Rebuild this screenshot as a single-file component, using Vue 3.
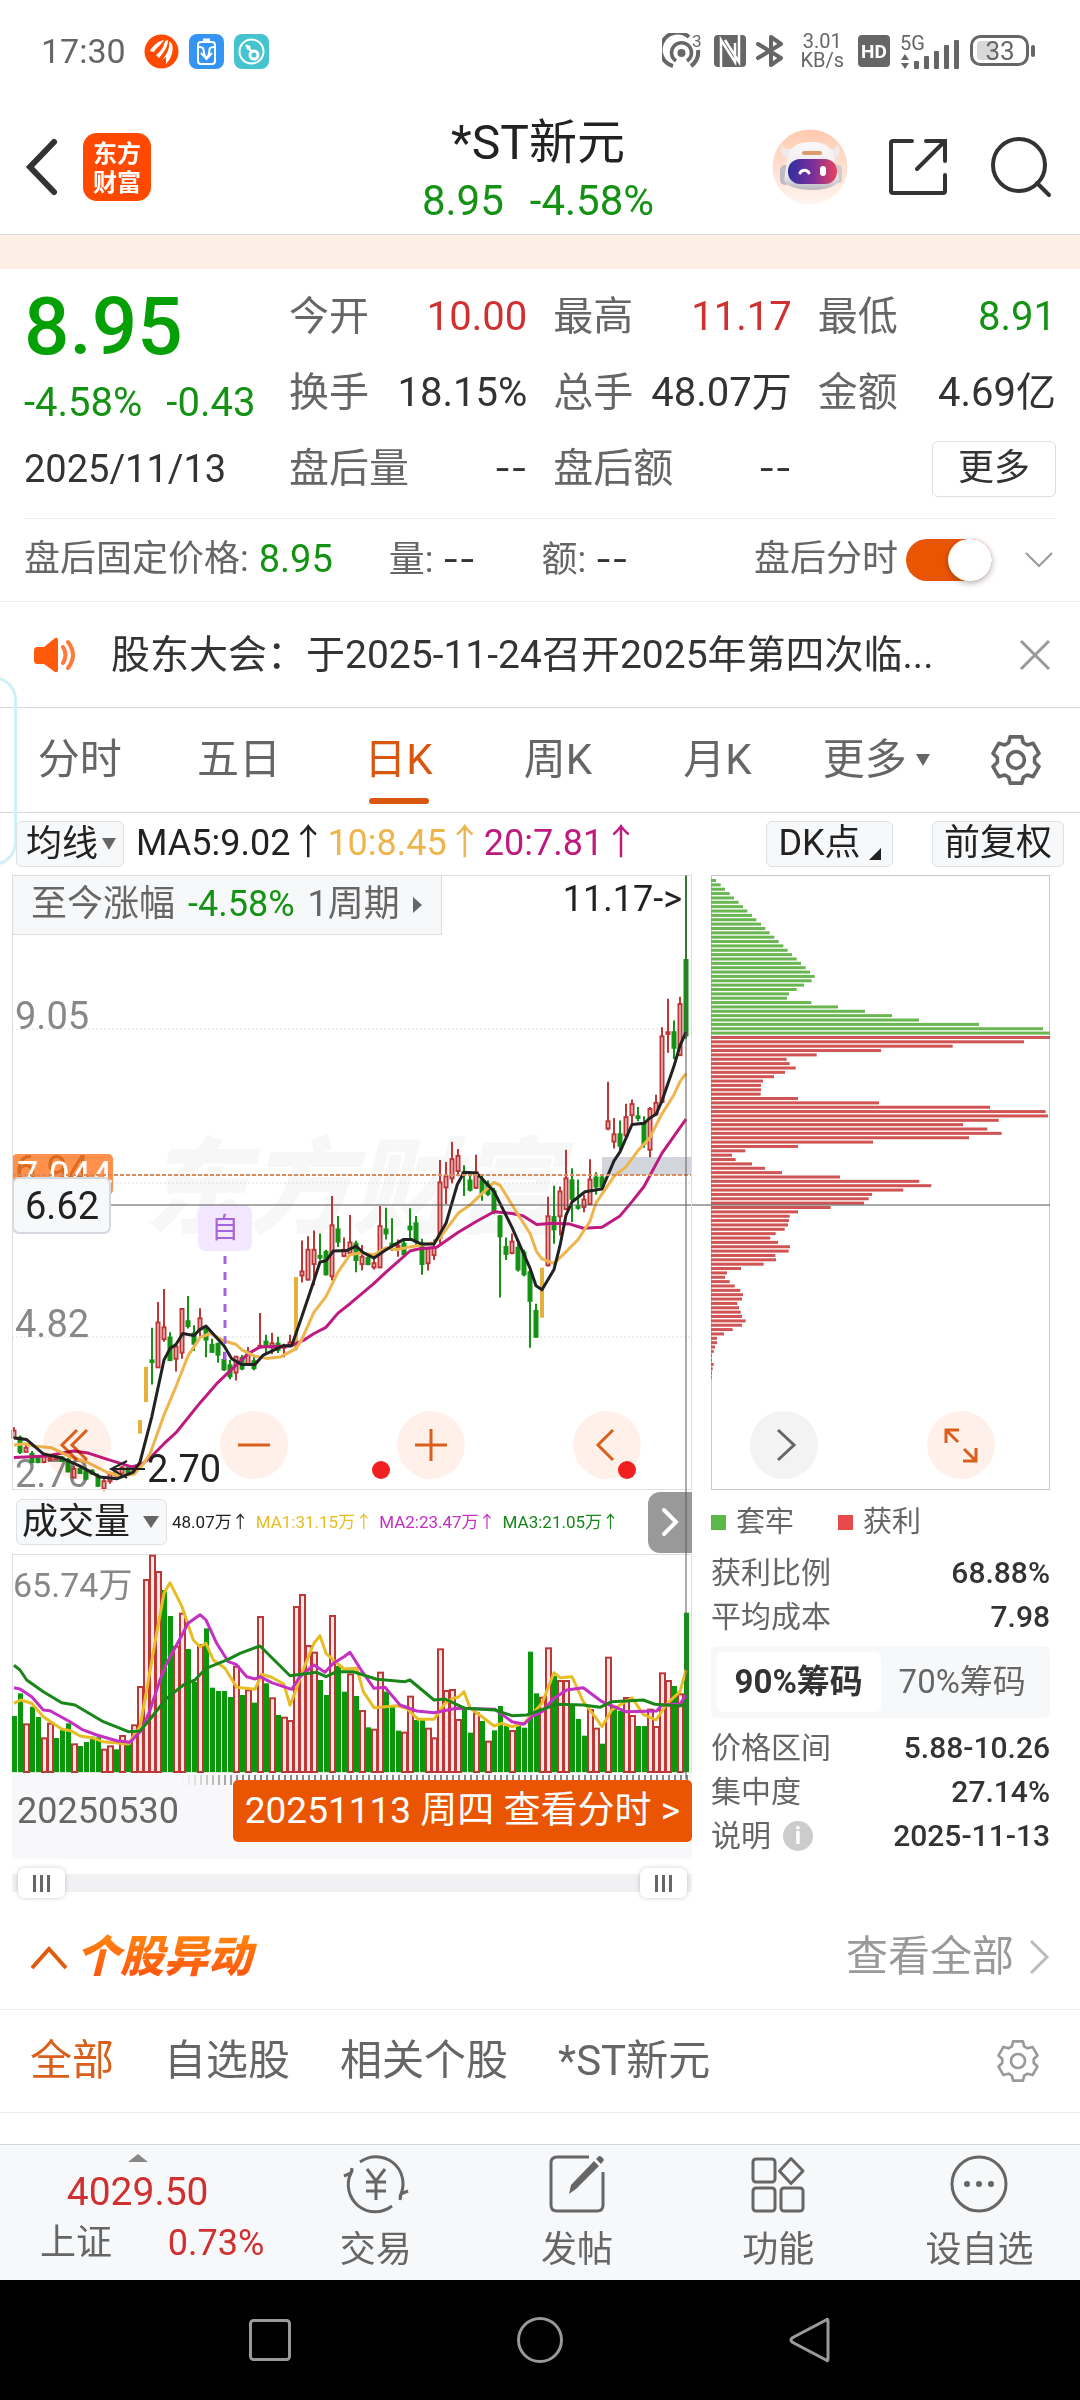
<script setup>
import { ref } from 'vue'

const afterHours = ref(true)
const rangeStart = ref(0)
const rangeEnd = ref(100)
const period = ref('日K')
const periods = ['分时', '五日', '日K', '周K', '月K']
const chip = ref('90')

const quotes = [
  { label: '今开', value: '10.00', tone: 'up' },
  { label: '最高', value: '11.17', tone: 'up' },
  { label: '最低', value: '8.91', tone: 'down' },
  { label: '换手', value: '18.15%' },
  { label: '总手', value: '48.07万' },
  { label: '金额', value: '4.69亿' },
  { label: '盘后量', value: '--' },
  { label: '盘后额', value: '--' },
]

// Horizontal step between trading days, and the scale of the stored levels.
const STEP = 6
const dayX = (i) => 2 + i * STEP
const priceY = (v) => v / 2.45 - 15
const volY = (v) => v / 3 - 74

// One row per day: colour, high, body top, body bottom, low.
const candleRows = `r 1390 1398 1415 1415|g 1410 1415 1450 1455|r 1433 1440 1450 1450|g 1448 1455 1475 1478|g 1460 1465 1475 1478|r 1452 1460 1475 1478|r 1460 1465 1470 1472|r 1458 1462 1468 1470|g 1460 1464 1472 1474|g 1465 1470 1498 1500|r 1485 1492 1513 1515|g 1488 1492 1502 1504|g 1495 1500 1516 1520|g 1493 1496 1503 1506|g 1503 1510 1533 1536|r 1515 1522 1540 1545|r 1498 1505 1522 1528|r 1495 1498 1508 1510|r 1485 1488 1503 1508|g 1485 1490 1503 1506|r 1485 1490 1498 1504|y 1373 1373 1404 1404|y 1243 1243 1327 1327|g 1146 1226 1230 1285|r 1083 1133 1243 1243|r 1051 1145 1174 1180|g 1157 1170 1225 1228|r 1187 1192 1222 1253|r 1098 1100 1207 1222|g 1068 1130 1142 1148|g 1140 1160 1185 1203|r 1098 1123 1150 1172|g 1145 1150 1175 1218|g 1173 1188 1205 1207|g 1182 1186 1212 1232|g 1205 1225 1248 1252|g 1225 1238 1265 1272|r 1215 1217 1256 1275|g 1213 1220 1246 1250|r 1193 1210 1236 1240|g 1212 1228 1245 1250|r 1110 1190 1194 1196|g 1163 1180 1190 1210|r 1158 1184 1194 1210|g 1168 1185 1200 1208|r 1185 1192 1195 1218|r 1163 1182 1188 1190|y 1023 1023 1200 1200|r 932 1008 1018 1035|r 922 955 1028 1030|r 908 955 990 1042|g 915 970 974 980|g 955 960 1015 1018|r 823 895 1020 1030|g 872 905 935 948|r 925 955 970 973|r 870 937 963 970|g 933 940 980 1010|r 943 972 990 1005|g 968 975 990 993|r 970 988 998 1003|r 848 897 998 1000|g 852 905 915 930|g 878 940 945 958|r 930 945 950 972|g 932 940 966 970|g 853 898 905 930|g 872 890 935 945|g 928 940 990 1016|r 948 952 988 1006|r 930 950 968 980|r 735 790 925 940|r 740 775 802 843|r 690 733 780 792|r 708 725 762 775|g 748 765 770 823|g 763 785 808 812|r 722 765 803 806|g 772 785 815 835|g 785 795 818 823|g 803 812 860 868|g 870 873 922 1072|g 925 948 965 980|r 915 935 963 966|g 938 950 1003 1008|g 955 962 1015 1020|g 1003 1010 1080 1195|g 1087 1105 1168 1170|y 1000 1000 1120 1120|r 825 873 993 996|g 798 875 905 940|r 800 812 873 920|r 710 780 855 858|g 755 785 830 887|g 783 848 852 857|r 820 832 850 863|r 733 783 843 846|g 765 778 800 820|g 772 778 800 806|r 543 640 658 662|r 632 672 690 707|g 638 672 700 710|r 597 630 675 680|r 587 598 625 645|g 605 628 632 640|g 628 645 695 705|r 605 610 710 728|r 575 595 623 626|r 410 432 593 595|r 340 422 426 472|g 393 422 460 488|r 335 353 478 480|g 37 245 430 438`
const candles = candleRows.split('|').map((row, i) => {
  const [tone, ...levels] = row.split(' ')
  const [high, top, bottom, low] = levels.map((v) => priceY(Number(v)))
  return { x: dayX(i), tone, high, top, bottom, low }
})

const volumeRows = 'g708 g640 r730 g680 g711 r772 r728 g774 g748 g730 r790 g798 g786 g770 g772 r806 r796 g808 r765 g793 r733 r618 r297 r224 r273 g330 g408 r497 r398 g507 g606 r492 g445 g623 g633 g633 g651 r557 g645 r628 g668 r408 g610 r652 g705 r710 r720 r378 r342 r495 r515 g600 g645 r405 g558 g635 r580 g648 r690 g742 r746 r575 g635 g680 g752 r755 r647 g720 g720 r743 r772 r505 r630 r627 r717 g688 g758 r697 g723 r782 g751 g678 g738 r750 g735 g743 g515 g640 r650 r502 g588 r600 r600 g678 g717 g767 r687 r743 g791 r530 g680 g693 r651 r705 g738 g738 r686 r738 r577 r600 g618 r640 g398'
const volumes = volumeRows.split(' ').map((row, i) => ({
  x: dayX(i),
  tone: row[0],
  top: volY(Number(row.slice(1))),
}))

const line = (points, toY) =>
  points.trim().split(' ').map((p) => {
    const [x, y] = p.split(',').map(Number)
    return `${(x / 3 - 12).toFixed(1)},${toY(y).toFixed(1)}`
  }).join(' ')

const ma5 = line('42,1416 80,1420 130,1455 185,1465 240,1485 300,1512 350,1516 400,1500 420,1475 455,1365 492,1225 510,1197 528,1187 548,1160 582,1165 600,1150 618,1142 672,1190 695,1222 725,1236 765,1236 790,1213 850,1190 875,1190 905,1120 942,1030 960,985 978,982 1000,958 1040,957 1068,946 1090,962 1122,975 1158,955 1210,930 1235,930 1265,941 1302,941 1338,890 1372,795 1392,765 1430,767 1482,812 1536,900 1590,1000 1608,1043 1626,1053 1662,1003 1680,945 1698,870 1716,838 1755,813 1806,806 1842,737 1860,715 1896,648 1932,645 1950,632 1968,623 1986,590 2022,505 2040,455 2058,422', priceY)
const ma10 = line('42,1433 75,1430 100,1436 155,1440 210,1462 260,1475 320,1500 360,1508 402,1505 430,1480 450,1455 492,1360 528,1290 564,1215 600,1170 630,1160 672,1178 708,1187 726,1200 762,1215 800,1221 840,1218 888,1197 905,1175 942,1108 978,1070 1014,1010 1050,967 1080,963 1122,967 1158,950 1190,955 1230,948 1300,938 1320,925 1375,865 1410,845 1482,790 1500,797 1536,845 1590,915 1610,960 1626,977 1662,988 1698,960 1734,930 1770,885 1788,840 1842,775 1878,752 1914,712 1950,680 1968,650 1986,622 2022,575 2040,543 2058,523', priceY)
const ma20 = line('42,1464 140,1460 220,1448 265,1453 320,1468 395,1487 425,1480 450,1465 492,1430 528,1403 600,1330 650,1283 705,1240 744,1210 780,1193 870,1191 910,1177 942,1160 978,1145 1014,1110 1050,1087 1122,1037 1158,1010 1230,958 1255,953 1310,949 1375,912 1430,885 1482,862 1536,866 1570,872 1610,893 1662,890 1710,892 1750,902 1806,900 1860,872 1896,837 1932,800 1986,718 2058,635', priceY)
const vol1 = line('42,670 62,660 95,670 130,710 185,747 215,753 240,768 275,773 310,785 385,792 420,740 440,630 468,470 492,340 510,308 546,380 580,480 600,500 618,490 640,540 675,565 710,622 765,628 785,583 815,592 852,613 870,676 888,630 905,580 942,490 960,467 978,520 1000,540 1032,567 1070,565 1090,635 1122,683 1190,677 1220,685 1255,718 1302,718 1335,670 1360,655 1375,652 1392,635 1410,683 1446,710 1482,738 1505,730 1536,740 1572,730 1626,670 1662,578 1680,593 1716,590 1750,665 1785,710 1806,740 1835,690 1896,653 1930,703 1968,720 2000,672 2040,635 2058,570', volY)
const vol2 = line('42,623 60,627 95,650 130,690 150,692 210,725 245,748 290,765 350,782 390,787 425,750 450,690 480,600 500,550 546,465 564,430 600,404 618,420 650,490 685,545 708,553 740,590 765,597 780,590 815,608 875,628 900,590 942,555 975,577 1000,550 1032,530 1050,517 1080,565 1122,625 1155,622 1200,675 1250,693 1302,698 1370,685 1485,688 1536,725 1572,733 1595,710 1626,695 1662,655 1700,630 1750,623 1806,665 1878,695 1970,693 1985,675 2040,672 2058,645', volY)
const vol3 = line('42,556 60,570 80,600 130,635 185,668 225,675 310,725 385,755 420,753 450,718 500,655 550,615 585,600 618,565 685,538 720,520 780,498 870,587 950,577 978,590 1010,575 1060,575 1130,598 1215,605 1230,600 1302,660 1335,657 1395,685 1485,690 1536,707 1580,705 1670,673 1750,675 1800,682 1835,665 1930,660 1965,673 2040,678 2058,670', volY)

// Chip distribution, from the highest price down; the first 36 levels are at a loss.
const chips = [15, 29, 42, 56, 69, 83, 96, 109, 123, 136, 150, 163, 176, 190, 203, 217, 230, 243, 257, 270, 284, 297, 311, 302, 279, 257, 234, 228, 301, 381, 462, 543, 624, 804, 996, 1017, 1017, 939, 725, 510, 317, 227, 236, 254, 222, 189, 156, 150, 150, 149, 261, 504, 837, 1004, 1011, 863, 756, 829, 872, 774, 486, 261, 103, 63, 74, 123, 162, 213, 387, 625, 661, 577, 483, 473, 459, 359, 261, 236, 234, 231, 221, 194, 178, 201, 237, 233, 193, 195, 158, 90, 48, 42, 56, 71, 88, 96, 93, 79, 84, 89, 93, 104, 93, 65, 39, 18, 18, 12, 8, 3, 3, 8, 5, 3, 2]
  .map((v, i) => ({ width: v / 3, y: 5 + i * 4.36, loss: i < 36 }))

const gear = (() => {
  const pts = []
  for (let k = 0; k < 6; k++) {
    for (const [da, r] of [[-23, 18], [-14, 23], [14, 23], [23, 18]]) {
      const a = ((k * 60 - 90 + da) * Math.PI) / 180
      pts.push(`${(25 + r * Math.cos(a)).toFixed(1)},${(25 + r * Math.sin(a)).toFixed(1)}`)
    }
  }
  return pts.join(' ')
})()
</script>

<template>
  <div class="page">
    <div class="status">
      <span class="clock">17:30</span>
      <svg width="35" height="35" viewBox="0 0 35 35">
        <circle cx="17.5" cy="17.5" r="17" fill="#ff4a00" />
        <g fill="#fff"><path d="M6 17C10 10 15 7 20 6C17 11 12 14 10 18Z" /><path d="M12 21C18 16 20 12 21 7L24 6C24 14 18 20 15 24Z" /><path d="M18 26C24 19 26 13 25 7L28 10C30 17 27 25 22 30L22 23Z" /></g>
      </svg>
      <svg width="35" height="35" viewBox="0 0 35 35">
        <rect width="35" height="35" rx="8" fill="#3595f5" />
        <g fill="none" stroke="#fff" stroke-width="2"><rect x="9" y="8" width="17" height="22" rx="3" /><path d="M14 6h7" stroke-width="3" /><path d="M10 13c8 0 2 6 7.5 11M25 13c-8 0-2 6-7.5 11M12 19l5.500 6l5.500-6" /></g>
      </svg>
      <svg width="35" height="35" viewBox="0 0 35 35">
        <rect width="35" height="35" rx="8" fill="#45c4d0" />
        <g fill="none" stroke="#fff" stroke-width="2"><circle cx="17.5" cy="17.5" r="12" /><circle cx="20" cy="21" r="4" stroke-width="3" /><path d="M18 18l-6-7M13 15l3-3" stroke-width="2.500" /></g>
      </svg>
      <span class="grow"></span>
      <svg width="42" height="36" viewBox="0 0 42 36">
        <g fill="none" stroke="#666" stroke-width="4"><path d="M11 33A17 17 0 1 1 27 4M36 17A17 17 0 0 1 29 33" /><path d="M14 28A10 10 0 1 1 25 28" stroke-width="3.500" /></g>
        <circle cx="19.5" cy="20" r="4" fill="#666" />
        <text x="30" y="14" font-size="17" fill="#666">3</text>
      </svg>
      <svg width="32" height="32" viewBox="0 0 32 32">
        <rect width="32" height="32" rx="4" fill="#666" />
        <path d="M7 32V5L21 27V8M11 5L25 27V0" fill="none" stroke="#fff" stroke-width="2.500" />
      </svg>
      <svg width="28" height="34" viewBox="0 0 28 34"><path d="M2 10L25 24L15 31V3L25 10L2 24" fill="none" stroke="#666" stroke-width="4" stroke-linejoin="round" stroke-linecap="round" /></svg>
      <span class="speed">3.01<br>KB/s</span>
      <svg width="32" height="32" viewBox="0 0 32 32">
        <rect width="32" height="32" rx="4" fill="#666" />
        <text x="16" y="23" font-size="19" font-weight="700" text-anchor="middle" fill="#fff">HD</text>
      </svg>
      <svg width="60" height="40" viewBox="0 0 60 40">
        <text x="0" y="19" font-size="20" fill="#666">5G</text>
        <g fill="#666"><path d="M1 29l4-6l4 6zM1 32h8l-4 6z" /><rect x="14" y="30" width="5" height="8" rx="1" /><rect x="24" y="25" width="5" height="13" rx="1" /><rect x="34" y="20" width="5" height="18" rx="1" /><rect x="44" y="14" width="5" height="24" rx="1" /><rect x="54" y="9" width="5" height="29" rx="1" /></g>
      </svg>
      <svg width="66" height="32" viewBox="0 0 66 32">
        <rect x="1.500" y="1.500" width="56" height="28" rx="9" fill="none" stroke="#666" stroke-width="3" />
        <rect x="7" y="6" width="18" height="19" rx="4" fill="#d8d8d8" />
        <rect x="61" y="10" width="4" height="12" rx="2" fill="#666" />
        <text x="30" y="25" font-size="26" text-anchor="middle" fill="#666">33</text>
      </svg>
    </div>

    <header class="header">
      <div class="side">
        <button class="icon" aria-label="返回"><svg width="36" height="60" viewBox="0 0 36 60"><path d="M30 5L6 30L30 55" fill="none" stroke="#333" stroke-width="6" stroke-linecap="round" /></svg></button>
        <a class="logo" href="#">东方<br>财富</a>
      </div>
      <div class="title">
        <h1>*ST新元</h1>
        <p class="down"><span>8.95</span><span>-4.58%</span></p>
      </div>
      <div class="side right">
        <button class="icon" aria-label="智能助手">
          <svg width="76" height="76" viewBox="0 0 76 76">
            <defs>
              <linearGradient id="halo" x1="0" y1="0" x2="0" y2="1"><stop offset="0" stop-color="#ffc9ae" /><stop offset="1" stop-color="#fff6f1" /></linearGradient>
              <linearGradient id="visor" x1="0" y1="0" x2="1" y2="0"><stop offset="0" stop-color="#2e2fa0" /><stop offset="0.500" stop-color="#7a2f9c" /><stop offset="1" stop-color="#e8435a" /></linearGradient>
              <linearGradient id="shell" x1="0" y1="0" x2="0" y2="1"><stop offset="0" stop-color="#fbf8f8" /><stop offset="0.700" stop-color="#ebe8ec" /><stop offset="1" stop-color="#b9b5be" /></linearGradient>
            </defs>
            <circle cx="38" cy="38" r="37.500" fill="url(#halo)" />
            <path d="M18 30C9 28 7 22 10 16C13 22 20 20 25 18M53 18C60 21 64 20 66 15C70 24 66 30 60 31" fill="#f0e9ea" />
            <rect x="8" y="36" width="10" height="20" rx="5" fill="#bfbbc4" /><rect x="61" y="36" width="9" height="18" rx="4" fill="#cfcbd2" />
            <path d="M15 32C17 16 28 13 39 13S61 16 63 32L67 50C66 58 52 61 40 61S14 58 12 51Z" fill="url(#shell)" />
            <rect x="16" y="30" width="49" height="25" rx="12" fill="url(#visor)" />
            <rect x="30" y="22" width="20" height="4" rx="2" fill="#dd9a6b" />
            <path d="M28 44a5 5 0 0 1 9 0" fill="none" stroke="#fff" stroke-width="3" stroke-linecap="round" /><rect x="48" y="37" width="6" height="10" rx="3" fill="#fff" />
          </svg>
        </button>
        <button class="icon" aria-label="分享"><svg width="60" height="60" viewBox="0 0 60 60"><path d="M23 4H4a2 2 0 0 0-2 2V54a2 2 0 0 0 2 2H54a2 2 0 0 0 2-2V38M37 4H56V24M56 4L28 32" fill="none" stroke="#333" stroke-width="4" stroke-linecap="round" /></svg></button>
        <button class="icon" aria-label="搜索"><svg width="62" height="62" viewBox="0 0 62 62"><circle cx="29" cy="29" r="26" fill="none" stroke="#333" stroke-width="4" /><path d="M47 47L59 59" stroke="#333" stroke-width="4" stroke-linecap="round" /></svg></button>
      </div>
    </header>
    <div class="band"></div>

    <section class="quote">
      <div class="main">
        <strong>8.95</strong>
        <p class="change"><span>-4.58%</span><span>-0.43</span></p>
        <time>2025/11/13</time>
      </div>
      <div v-for="q in quotes" :key="q.label" class="cell">
        <span class="muted">{{ q.label }}</span>
        <span :class="[q.tone, { dash: q.value === '--' }]">{{ q.value }}</span>
      </div>
      <div class="cell end"><button class="more">更多</button></div>
    </section>

    <section class="after">
      <span>盘后固定价格:</span><b class="down">8.95</b>
      <span class="vol">量: <i class="dash">--</i></span>
      <span>额: <i class="dash">--</i></span>
      <label for="after-hours">盘后分时</label>
      <input id="after-hours" v-model="afterHours" type="checkbox" class="switch">
      <button class="icon" aria-label="展开"><svg width="30" height="20" viewBox="0 0 30 20"><path d="M2 3L15 16L28 3" fill="none" stroke="#999" stroke-width="2" /></svg></button>
    </section>

    <section class="notice">
      <svg width="46" height="38" viewBox="0 0 46 38"><path d="M4 11H11L22 2Q25 1 25 4V34Q25 37 22 36L11 28H4Q1 28 1 24V15Q1 11 4 11Z" fill="#ff5a0a" /><path d="M30 11Q35 19 30 27M35 6Q45 19 35 32" fill="none" stroke="#ff7a3a" stroke-width="4" stroke-linecap="round" /></svg>
      <a href="#">股东大会：于2025-11-24召开2025年第四次临...</a>
      <button class="icon" aria-label="关闭"><svg width="32" height="32" viewBox="0 0 32 32"><path d="M2 2L30 30M30 2L2 30" stroke="#999" stroke-width="3" /></svg></button>
    </section>

    <nav class="periods">
      <button v-for="p in periods" :key="p" :class="{ on: p === period }" @click="period = p">{{ p }}</button>
      <button>更多<svg width="16" height="14" viewBox="0 0 16 14"><path d="M1 1H15L8 13Z" fill="#666" /></svg></button>
      <button class="cog" aria-label="设置"><svg width="52" height="52" viewBox="0 0 50 50"><polygon :points="gear" fill="none" stroke="#666" stroke-width="3.500" stroke-linejoin="round" /><circle cx="25" cy="25" r="8" fill="none" stroke="#666" stroke-width="3.500" /></svg></button>
      <div class="bubble"></div>
    </nav>

    <div class="tools">
      <label class="pick"><select aria-label="指标"><option>均线</option></select><svg width="14" height="14" viewBox="0 0 14 14"><path d="M0 1H14L7 13Z" fill="#666" /></svg></label>
      <p class="ma"><span>MA5:9.02↑</span><span class="c10">10:8.45↑</span><span class="c20">20:7.81↑</span></p>
      <button class="box dk">DK点<svg width="12" height="12" viewBox="0 0 12 12"><path d="M12 0V12H0Z" fill="#222" /></svg></button>
      <button class="box adj">前复权</button>
    </div>

    <section class="charts">
      <div class="left">
        <div class="price">
          <svg class="plot" viewBox="0 0 680 615">
            <text class="mark" x="132" y="350">东方财富</text>
            <rect x="590" y="282" width="90" height="18" fill="#d2d6dc" />
            <g stroke="#ddd" stroke-width="1" stroke-dasharray="2 2"><path d="M0 154H680M0 308H680M0 462H680" /></g>
            <g class="axis"><text x="3" y="154">9.05</text><text x="3" y="462">4.82</text><text x="3" y="612">2.70</text></g>
            <g v-for="c in candles" :key="c.x" :class="'k-' + c.tone">
              <line :x1="c.x" :x2="c.x" :y1="c.high" :y2="c.top" />
              <line :x1="c.x" :x2="c.x" :y1="c.bottom" :y2="c.low" />
              <rect :x="c.x - 1.5" :y="c.top" width="3" :height="c.bottom - c.top" />
            </g>
            <polyline :points="ma20" class="curve" stroke="#be1a7f" />
            <polyline :points="ma10" class="curve" stroke="#efb54d" />
            <polyline :points="ma5" class="curve" stroke="#222" />
            <rect x="186" y="330" width="54" height="46" rx="8" fill="#f0e2ff" fill-opacity="0.800" />
            <text x="213" y="363" font-size="28" text-anchor="middle" fill="#a566dd">自</text>
            <path d="M213 381V485" stroke="#a566dd" stroke-width="3" stroke-dasharray="8 8" />
            <rect x="0" y="279" width="101" height="41" rx="5" fill="#ff914d" />
            <text x="3" y="308" font-size="38" fill="#d96a20">6.94</text>
            <text x="5" y="314" font-size="38" fill="#fff">7.044</text>
            <path d="M0 300H680" stroke="#dd8a5a" stroke-width="2" stroke-dasharray="4 2" />
            <path d="M98 330H680" stroke="#555" stroke-width="1" />
            <rect x="1" y="303" width="97" height="55" rx="6" fill="#f7f8fa" stroke="#d5d8de" stroke-width="2" />
            <text x="13" y="344" font-size="38" fill="#222">6.62</text>
            <text x="670" y="36" font-size="36" text-anchor="end" fill="#222">11.17-&gt;</text>
            <path d="M115 586L99 594L115 603M99 594H133" fill="none" stroke="#222" stroke-width="2" />
            <text x="135" y="607" font-size="38" fill="#222">2.70</text>
            <circle cx="369" cy="595" r="9" fill="#f02020" /><circle cx="615" cy="595" r="9" fill="#f02020" />
            <rect x="0.500" y="0.500" width="679" height="614" fill="none" stroke="#ddd" />
          </svg>
          <button class="since">至今涨幅<span class="down">-4.58%</span>1周期<svg width="10" height="18" viewBox="0 0 10 18"><path d="M0 1L9 9L0 17Z" fill="#666" /></svg></button>
        </div>
        <div class="volhead">
          <label class="pick wide"><select aria-label="副图"><option>成交量</option></select><svg width="16" height="14" viewBox="0 0 16 14"><path d="M0 1H16L8 13Z" fill="#666" /></svg></label>
          <p class="volma"><span>48.07万↑</span><span class="v1">MA1:31.15万↑</span><span class="v2">MA2:23.47万↑</span><span class="v3">MA3:21.05万↑</span></p>
          <button class="fold" aria-label="下一组"><svg width="18" height="30" viewBox="0 0 18 30"><path d="M3 3L15 15L3 27" fill="none" stroke="#fff" stroke-width="4" stroke-linecap="round" /></svg></button>
        </div>
        <svg class="plot" viewBox="0 0 680 220">
          <rect x="0.500" y="0.500" width="679" height="218" fill="none" stroke="#ddd" />
          <g v-for="v in volumes" :key="v.x">
            <rect v-if="v.tone === 'g'" :x="v.x - 2" :y="v.top" width="5" :height="218 - v.top" fill="#0a980a" />
            <rect v-else :x="v.x - 2" :y="v.top + 1" width="5" :height="217 - v.top" fill="#fbe9e9" stroke="#be3737" stroke-width="2" />
          </g>
          <text x="1" y="43" font-size="34" fill="#888">65.74万</text>
          <polyline :points="vol1" class="curve" stroke="#e6bd25" />
          <polyline :points="vol2" class="curve" stroke="#c42fc4" />
          <polyline :points="vol3" class="curve" stroke="#188618" />
        </svg>
        <div class="dates">
          <div class="ticks"></div>
          <span>20250530</span>
          <button>20251113 周四 查看分时 &gt;</button>
        </div>
        <div class="cross"></div>
        <div class="range">
          <input v-model="rangeStart" type="range" min="0" max="100" aria-label="区间起点">
          <input v-model="rangeEnd" type="range" min="0" max="100" aria-label="区间终点">
        </div>
      </div>

      <div class="side-panel">
        <svg class="plot" viewBox="0 0 339 615">
          <rect x="0.500" y="0.500" width="338" height="614" fill="none" stroke="#c8c8c8" />
          <rect v-for="b in chips" :key="b.y" x="0" :y="b.y - 1" :width="b.width" height="3" :fill="b.loss ? '#6ab651' : '#d15454'" />
          <path d="M-20 330H339" stroke="#555" stroke-width="1" />
        </svg>
        <div class="legend"><i class="loss"></i><span>套牢</span><i class="gain"></i><span>获利</span></div>
        <dl>
          <div><dt>获利比例</dt><dd>68.88%</dd></div>
          <div><dt>平均成本</dt><dd>7.98</dd></div>
        </dl>
        <div class="segment">
          <button :class="{ on: chip === '90' }" @click="chip = '90'">90%筹码</button>
          <button :class="{ on: chip === '70' }" @click="chip = '70'">70%筹码</button>
        </div>
        <dl>
          <div><dt>价格区间</dt><dd>5.88-10.26</dd></div>
          <div><dt>集中度</dt><dd>27.14%</dd></div>
          <div><dt>说明<i class="info">i</i></dt><dd>2025-11-13</dd></div>
        </dl>
      </div>

      <div class="controls">
        <button aria-label="最早"><svg viewBox="0 0 68 68"><path d="M34 19L19 34L34 49M44 19L29 34L44 49" /></svg></button>
        <button aria-label="缩小"><svg viewBox="0 0 68 68"><path d="M18 34H50" /></svg></button>
        <button aria-label="放大"><svg viewBox="0 0 68 68"><path d="M18 34H50M34 18V50" /></svg></button>
        <button aria-label="向左"><svg viewBox="0 0 68 68"><path d="M40 19L25 34L40 49" /></svg></button>
        <button aria-label="向右" class="off"><svg viewBox="0 0 68 68"><path d="M28 19L44 34L28 49" /></svg></button>
        <button aria-label="全屏"><svg viewBox="0 0 68 68"><path d="M32 19H19V32M19 19L31 31M36 50H49V37M49 50L37 38" /></svg></button>
      </div>
    </section>

    <section class="moves">
      <svg width="38" height="26" viewBox="0 0 38 26"><path d="M2 23L19 4L36 23" fill="none" stroke="#e05a10" stroke-width="4" /></svg>
      <h2>个股异动</h2>
      <a href="#">查看全部<svg width="22" height="38" viewBox="0 0 22 38"><path d="M3 3L19 19L3 35" fill="none" stroke="#bbb" stroke-width="3" /></svg></a>
    </section>
    <nav class="filters">
      <button class="on">全部</button><button>自选股</button><button>相关个股</button><button>*ST新元</button>
      <button class="cog" aria-label="筛选设置"><svg width="44" height="44" viewBox="0 0 50 50"><polygon :points="gear" fill="none" stroke="#999" stroke-width="3" stroke-linejoin="round" /><circle cx="25" cy="25" r="8" fill="none" stroke="#999" stroke-width="3" /></svg></button>
    </nav>
    <div class="peek"></div>

    <footer class="bar">
      <a class="index" href="#">
        <svg width="20" height="8" viewBox="0 0 20 8"><path d="M0 8L10 0L20 8Z" fill="#888" /></svg>
        <span class="up">4029.50</span>
        <span class="pair"><span>上证</span><span class="up">0.73%</span></span>
      </a>
      <a href="#"><svg width="66" height="60" viewBox="0 0 66 60"><g fill="none" stroke="#666" stroke-width="3"><path d="M17 8A27 27 0 0 1 58 40L65 37M58 40L57 46M49 52A27 27 0 0 1 8 19L1 22M8 19L9 14" /><path d="M24 15L33 27L42 15M33 27V46M23 28H43M23 37H43" /></g></svg>交易</a>
      <a href="#"><svg width="60" height="60" viewBox="0 0 60 60"><path d="M42 3H10Q4 3 4 9V51Q4 57 10 57H50Q56 57 56 51V18" fill="none" stroke="#666" stroke-width="3" /><path d="M22 40L24 31L47 7L52 12L29 35ZM49 5L52 2Q55 2 57 6L54 10Z" fill="#666" /></svg>发帖</a>
      <a href="#"><svg width="60" height="60" viewBox="0 0 60 60"><g fill="none" stroke="#666" stroke-width="3"><rect x="5" y="5" width="22" height="23" rx="3" /><rect x="5" y="34" width="22" height="23" rx="3" /><rect x="33" y="34" width="22" height="23" rx="3" /><path d="M43 4.500L55 17L43 29.500L31.500 17Z" stroke-linejoin="round" /></g></svg>功能</a>
      <a href="#"><svg width="60" height="60" viewBox="0 0 60 60"><circle cx="30" cy="30" r="27" fill="none" stroke="#666" stroke-width="3" /><g fill="#666"><circle cx="18" cy="30" r="3" /><circle cx="30" cy="30" r="3" /><circle cx="42" cy="30" r="3" /></g></svg>设自选</a>
    </footer>

    <div class="system">
      <button aria-label="最近任务"><svg width="48" height="48" viewBox="0 0 48 48"><rect x="4.500" y="4.500" width="39" height="39" rx="3" /></svg></button>
      <button aria-label="主屏幕"><svg width="48" height="48" viewBox="0 0 48 48"><circle cx="24" cy="24" r="21.500" /></svg></button>
      <button aria-label="后退"><svg width="48" height="48" viewBox="0 0 48 48"><path d="M40 4Q42 2 42 5V43Q42 46 40 44L6 26Q4 24 6 22Z" /></svg></button>
    </div>
  </div>
</template>

<style>
body {
  background: #fff;
}
</style>

<style scoped>
.page {
  font-family: Roboto, "Noto Sans CJK SC", sans-serif;
  font-size: 40px;
  line-height: 1.2;
  color: #333;
  background: #fff;
}
* {
  box-sizing: border-box;
}
button {
  font: inherit;
  color: inherit;
  background: none;
  border: 0;
  padding: 0;
  white-space: nowrap;
}
a {
  color: inherit;
  text-decoration: none;
}
p, h1, h2, dl, dd {
  margin: 0;
}
svg {
  display: block;
  flex: none;
}
i {
  font-style: normal;
}
.icon {
  display: flex;
}
.grow {
  flex: 1;
}
.up {
  color: #cf3030;
}
.down {
  color: #149214;
}
.muted {
  color: #666;
}
.dash {
  font-family: Inter, sans-serif;
  font-size: 36px;
  color: #333;
}

.status {
  height: 100px;
  padding: 2px 44px 0 41px;
  display: flex;
  align-items: center;
  gap: 10px;
  color: #666;
}
.clock {
  font-size: 34px;
  margin-right: 8px;
}
.speed {
  font-size: 20px;
  line-height: 19px;
  text-align: center;
  margin: 0 4px 0 6px;
}

.header {
  height: 135px;
  border-bottom: 1px solid #d8d8d8;
  padding: 0 28px 0 24px;
  display: grid;
  grid-template-columns: 1fr auto 1fr;
  align-items: center;
}
.side {
  display: flex;
  align-items: center;
  gap: 23px;
}
.side.right {
  justify-content: flex-end;
  gap: 41px;
}
.logo {
  width: 68px;
  height: 68px;
  border-radius: 14px;
  background: #ff4800;
  color: #fff;
  font: 700 24px/29px "Noto Sans CJK SC", sans-serif;
  text-align: center;
  padding-top: 4px;
}
.title {
  padding-top: 8px;
  text-align: center;
}
.title h1 {
  font-size: 48px;
  line-height: 60px;
  font-weight: 400;
  color: #222;
}
.title p {
  font-size: 42px;
  line-height: 56px;
  display: flex;
  gap: 26px;
  justify-content: center;
}
.band {
  height: 34px;
  background: #fdeee6;
}

.quote {
  margin: 0 24px;
  padding: 10px 0 11px;
  display: grid;
  grid-template-columns: 239px repeat(3, 1fr);
  grid-auto-rows: 76px;
  column-gap: 26px;
  border-bottom: 1px solid #eee;
}
.main {
  grid-row: span 3;
}
.main strong {
  display: block;
  font-size: 80px;
  line-height: 96px;
  font-weight: 500;
  color: #05a005;
}
.change {
  display: flex;
  gap: 24px;
  line-height: 56px;
  color: #149214;
}
.main time {
  display: block;
  font-size: 38px;
  line-height: 76px;
}
.cell {
  display: flex;
  align-items: center;
  justify-content: space-between;
  white-space: nowrap;
}
.end {
  justify-content: flex-end;
}
.more {
  width: 124px;
  height: 56px;
  font-size: 36px;
  border: 1px solid #ddd;
  border-radius: 6px;
}

.after {
  height: 83px;
  padding: 0 26px 0 24px;
  border-bottom: 1px solid #eee;
  display: flex;
  align-items: center;
  font-size: 36px;
  color: #666;
}
.after b {
  font-size: 38px;
  font-weight: 400;
  margin-left: 10px;
}
.after .vol {
  margin: 0 66px 0 56px;
}
.after label {
  margin-left: auto;
}
.after .icon {
  margin-left: 32px;
}
.switch {
  appearance: none;
  width: 86px;
  height: 42px;
  margin: 0 0 0 8px;
  border-radius: 21px;
  background: #ccc;
  display: flex;
}
.switch:checked {
  background: #ea5504;
  justify-content: flex-end;
}
.switch::before {
  content: "";
  width: 44px;
  height: 42px;
  border-radius: 21px;
  background: #fff;
  box-shadow: 0 2px 6px rgba(0, 0, 0, 0.3);
}

.notice {
  height: 106px;
  padding: 0 29px 0 33px;
  border-bottom: 1px solid #d8d8d8;
  display: flex;
  align-items: center;
}
.notice a {
  flex: 1;
  margin-left: 32px;
  padding-top: 2px;
  font-size: 39px;
}

.periods {
  position: relative;
  height: 105px;
  border-bottom: 1px solid #d8d8d8;
  display: grid;
  grid-template-columns: repeat(6, 4fr) 3fr;
  padding-right: 4px;
  font-size: 42px;
  color: #666;
}
.periods button {
  display: flex;
  align-items: center;
  justify-content: center;
  gap: 8px;
  position: relative;
}
.periods .on {
  color: #d9560f;
}
.periods .on::after {
  content: "";
  position: absolute;
  bottom: 8px;
  width: 60px;
  height: 6px;
  border-radius: 3px;
  background: #d9560f;
}
.bubble {
  position: absolute;
  left: -40px;
  top: -32px;
  width: 57px;
  height: 190px;
  border: 3px solid #cdf1f4;
  border-radius: 24px;
  pointer-events: none;
}

.tools {
  height: 62px;
  padding: 0 16px;
  display: flex;
  align-items: center;
  font-size: 36px;
  color: #222;
}
.pick {
  position: relative;
  width: 108px;
  height: 46px;
  display: block;
}
.pick select {
  appearance: none;
  width: 100%;
  height: 100%;
  padding: 0 0 0 9px;
  font: inherit;
  line-height: 42px;
  color: #222;
  background: #f7f8fa;
  border: 1px solid #dde0e5;
  border-radius: 6px;
}
.pick svg {
  position: absolute;
  right: 8px;
  top: 16px;
  pointer-events: none;
}
.ma {
  display: flex;
  gap: 1px;
  margin-left: 12px;
  white-space: nowrap;
}
.c10 {
  color: #efb54d;
}
.c20 {
  color: #be1a7f;
}
.box {
  height: 46px;
  line-height: 42px;
  background: #f7f8fa;
  border: 1px solid #dde0e5;
  border-radius: 6px;
  display: flex;
  justify-content: center;
}
.dk {
  width: 127px;
  margin-left: auto;
  gap: 8px;
}
.dk svg {
  align-self: flex-end;
  margin-bottom: 6px;
}
.adj {
  width: 132px;
  margin-left: 39px;
}

.charts {
  position: relative;
  display: grid;
  grid-template-columns: 680fr 339fr;
  column-gap: 19px;
  padding: 0 30px 0 12px;
}
.left {
  position: relative;
  min-width: 0;
}
.price {
  position: relative;
}
.plot {
  width: 100%;
  height: auto;
  overflow: visible;
}
.mark {
  font-size: 104px;
  font-weight: 900;
  font-style: italic;
  fill: #f7f7f7;
}
.axis {
  font-size: 38px;
  fill: #888;
}
.curve {
  fill: none;
  stroke-width: 3;
  stroke-linejoin: round;
}
.k-r {
  stroke: #be3737;
  stroke-width: 2;
  fill: #fff;
}
.k-g {
  stroke: #149214;
  stroke-width: 2;
  fill: #149214;
}
.k-y {
  stroke: #e6b03c;
  stroke-width: 1;
  fill: #e6b03c;
}
.since {
  position: absolute;
  left: 0;
  top: 0;
  height: 60px;
  padding: 0 18px 0 18px;
  display: flex;
  align-items: center;
  gap: 13px;
  font-size: 36px;
  color: #666;
  background: #f7f8fa;
  border: 1px solid #ddd;
}
.volhead {
  height: 64px;
  padding-left: 4px;
  display: flex;
  align-items: center;
  font-size: 36px;
}
.pick.wide {
  width: 151px;
  flex: none;
}
.wide select {
  padding-left: 5px;
}
.volma {
  font-size: 17px;
  display: flex;
  gap: 7px;
  margin-left: 5px;
  white-space: nowrap;
  color: #222;
}
.v1 {
  color: #e6bd25;
}
.v2 {
  color: #c42fc4;
}
.v3 {
  color: #188618;
}
.fold {
  width: 44px;
  height: 61px;
  margin-left: auto;
  border-radius: 12px 0 0 12px;
  background: #999;
  display: flex;
  align-items: center;
  justify-content: center;
}
.dates {
  position: relative;
  height: 85px;
  padding: 6px 0 0 5px;
  display: flex;
  align-items: flex-start;
  justify-content: space-between;
  background: #f8f8fa;
  color: #666;
  font-size: 36px;
  line-height: 62px;
}
.ticks {
  position: absolute;
  top: 1px;
  left: 170px;
  right: 3px;
  height: 10px;
  background: repeating-linear-gradient(90deg, #888 0 2px, transparent 2px 6px);
  mask-image: linear-gradient(90deg, transparent, #000 60px);
}
.dates button {
  position: relative;
  z-index: 2;
  height: 62px;
  padding: 0 12px;
  font-size: 37px;
  color: #fff;
  background: #ea5504;
  border-radius: 5px;
}
.cross {
  position: absolute;
  left: 99%;
  top: 0;
  bottom: 119px;
  width: 2px;
  background: rgba(90, 90, 90, 0.5);
}
.range {
  height: 30px;
  margin-top: 9px;
  display: grid;
  padding: 0 5px 0 6px;
  background: linear-gradient(#f1f1f3, #f1f1f3) center / 100% 18px no-repeat;
  border-radius: 9px;
}
.range input {
  grid-area: 1 / 1;
  appearance: none;
  width: 100%;
  height: 30px;
  margin: 0;
  background: none;
  pointer-events: none;
}
.range input::-webkit-slider-thumb {
  appearance: none;
  width: 47px;
  height: 30px;
  border-radius: 7px;
  box-shadow: 0 0 5px rgba(0, 0, 0, 0.2);
  background: repeating-linear-gradient(90deg, #666 0 3px, transparent 3px 7px) center / 17px 17px no-repeat, #fff;
  pointer-events: auto;
}

.side-panel {
  min-width: 0;
  color: #666;
  font-size: 29px;
}
.legend {
  height: 60px;
  padding-top: 5px;
  display: flex;
  align-items: center;
}
.legend i {
  width: 15px;
  height: 15px;
  margin-right: 10px;
}
.loss {
  background: #5cb848;
}
.gain {
  background: #e84a4a;
  margin-left: 44px;
}
dl > div {
  height: 44px;
  padding-top: 1px;
  display: flex;
  align-items: center;
  justify-content: space-between;
}
dt {
  display: flex;
  align-items: center;
  font-size: 30px;
}
dd {
  font-size: 30px;
  font-weight: 500;
  color: #333;
}
.info {
  width: 30px;
  height: 30px;
  margin-left: 12px;
  border-radius: 15px;
  background: #ccc;
  color: #fff;
  font-size: 24px;
  font-weight: 700;
  line-height: 30px;
  text-align: center;
}
.segment {
  height: 72px;
  margin: 8px 0 7px;
  padding: 6px;
  border-radius: 6px;
  background: #f7f8fa;
  display: grid;
  grid-template-columns: 1fr 1fr;
  font-size: 33px;
}
.segment .on {
  background: #fff;
  border-radius: 6px;
  color: #333;
  font-weight: 700;
}
.controls {
  position: absolute;
  left: 43px;
  right: 85px;
  top: 536px;
  display: flex;
  justify-content: space-between;
  mix-blend-mode: multiply;
}
.controls button {
  width: 68px;
  height: 68px;
  border-radius: 34px;
  background: #fff1e9;
}
.controls path {
  fill: none;
  stroke: #d9601c;
  stroke-width: 3;
}
.controls .off {
  background: #f3f3f3;
}
.off path {
  stroke: #666;
}

.moves {
  height: 104px;
  margin-top: 8px;
  padding: 0 30px;
  border-bottom: 1px solid #eee;
  display: flex;
  align-items: center;
}
.moves h2 {
  margin-left: 8px;
  padding-right: 8px;
  font-size: 44px;
  font-weight: 900;
  font-style: italic;
  color: transparent;
  background: linear-gradient(#ff8a10, #ff4d10);
  background-clip: text;
}
.moves a {
  margin-left: auto;
  display: flex;
  align-items: center;
  gap: 14px;
  font-size: 42px;
  color: #999;
}
.filters {
  height: 103px;
  padding: 0 40px 0 30px;
  border-bottom: 1px solid #eee;
  display: flex;
  align-items: center;
  gap: 50px;
  font-size: 42px;
  color: #666;
}
.filters .on {
  color: #d9601c;
}
.filters .cog {
  margin-left: auto;
}
.peek {
  height: 31px;
}
.bar {
  height: 136px;
  border-top: 1px solid #d5d5d8;
  background: #f7f8fa;
  display: grid;
  grid-template-columns: 275fr repeat(4, 201fr);
  font-size: 36px;
  line-height: 42px;
  color: #666;
}
.bar a {
  padding-top: 9px;
  display: flex;
  flex-direction: column;
  align-items: center;
  gap: 15px;
}
.bar .index {
  gap: 9px;
  font-size: 39px;
}
.pair {
  width: 100%;
  padding: 0 11px 0 40px;
  display: flex;
  justify-content: space-between;
  font-size: 36px;
}
.system {
  height: 120px;
  background: #000;
  display: flex;
  align-items: center;
  justify-content: center;
  gap: 222px;
}
.system svg {
  fill: none;
  stroke: #999;
  stroke-width: 3;
}
</style>
